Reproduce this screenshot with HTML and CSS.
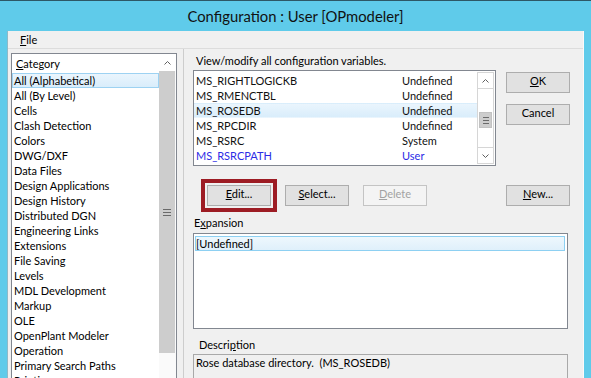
FILE: index.html
```html
<!DOCTYPE html>
<html lang="en">
<head>
    <meta charset="UTF-8">
    <meta name="viewport" content="width=device-width, initial-scale=1.0">
    <title>Configuration : User [OPmodeler]</title>
    <link rel="stylesheet" href="styles.css">
</head>
<body>
    <div class="window">
        <div class="titlebar">Configuration : User [OPmodeler]</div>
        <div class="client">
            <div class="menubar">
                <span class="menu-item"><u>F</u>ile</span>
            </div>
            <div class="content">
                <div class="category-list">
                    <div class="list-body">
                        <div class="list-header"><u>C</u>ategory</div>
                        <div class="list-item selected">All (Alphabetical)</div>
                        <div class="list-item">All (By Level)</div>
                        <div class="list-item">Cells</div>
                        <div class="list-item">Clash Detection</div>
                        <div class="list-item">Colors</div>
                        <div class="list-item">DWG/DXF</div>
                        <div class="list-item">Data Files</div>
                        <div class="list-item">Design Applications</div>
                        <div class="list-item">Design History</div>
                        <div class="list-item">Distributed DGN</div>
                        <div class="list-item">Engineering Links</div>
                        <div class="list-item">Extensions</div>
                        <div class="list-item">File Saving</div>
                        <div class="list-item">Levels</div>
                        <div class="list-item">MDL Development</div>
                        <div class="list-item">Markup</div>
                        <div class="list-item">OLE</div>
                        <div class="list-item">OpenPlant Modeler</div>
                        <div class="list-item">Operation</div>
                        <div class="list-item">Primary Search Paths</div>
                        <div class="list-item">Printing</div>
                    </div>
                    <div class="scrollbar">
                        <div class="scroll-btn">
                            <svg width="7" height="4" viewBox="0 0 7 4"><path d="M0.5 3.5L3.5 0.5L6.5 3.5" fill="none" stroke="#606060"/></svg>
                        </div>
                        <div class="scroll-thumb big">
                            <svg width="8" height="7" viewBox="0 0 8 7"><path d="M0 0.5H8M0 3.5H8M0 6.5H8" stroke="#6a6a6a"/></svg>
                        </div>
                        <div class="scroll-track"></div>
                    </div>
                </div>

                <div class="var-pane">
                    <div class="top-row">
                        <div class="var-col">
                            <div class="caption">View/modify all configuration variables.</div>
                            <div class="var-list">
                                <div class="var-rows">
                                    <div class="var-row"><span class="var-name">MS_RIGHTLOGICKB</span><span>Undefined</span></div>
                                    <div class="var-row"><span class="var-name">MS_RMENCTBL</span><span>Undefined</span></div>
                                    <div class="var-row selected"><span class="var-name">MS_ROSEDB</span><span>Undefined</span></div>
                                    <div class="var-row"><span class="var-name">MS_RPCDIR</span><span>Undefined</span></div>
                                    <div class="var-row"><span class="var-name">MS_RSRC</span><span>System</span></div>
                                    <div class="var-row user"><span class="var-name">MS_RSRCPATH</span><span>User</span></div>
                                </div>
                                <div class="scrollbar small">
                                    <div class="scroll-btn up">
                                        <svg width="7" height="4" viewBox="0 0 7 4"><path d="M0.5 3.5L3.5 0.5L6.5 3.5" fill="none" stroke="#606060"/></svg>
                                    </div>
                                    <div class="scroll-gap"></div>
                                    <div class="scroll-thumb">
                                        <svg width="6" height="7" viewBox="0 0 6 7"><path d="M0 0.5H6M0 3.5H6M0 6.5H6" stroke="#6a6a6a"/></svg>
                                    </div>
                                    <div class="scroll-track"></div>
                                    <div class="scroll-btn down">
                                        <svg width="7" height="4" viewBox="0 0 7 4"><path d="M0.5 0.5L3.5 3.5L6.5 0.5" fill="none" stroke="#606060"/></svg>
                                    </div>
                                </div>
                            </div>
                        </div>
                        <div class="dialog-buttons">
                            <button class="btn"><u>O</u>K</button>
                            <button class="btn">Cancel</button>
                        </div>
                    </div>

                    <div class="action-row">
                        <button class="btn marked"><u>E</u>dit...</button>
                        <button class="btn"><u>S</u>elect...</button>
                        <button class="btn" disabled><u>D</u>elete</button>
                        <button class="btn new-btn"><u>N</u>ew...</button>
                    </div>

                    <div class="field-label">E<u>x</u>pansion</div>
                    <div class="expansion-box">
                        <div class="expansion-value">[Undefined]</div>
                    </div>

                    <div class="field-label indent">Descri<u>p</u>tion</div>
                    <div class="description-box">Rose database directory.  (MS_ROSEDB)</div>
                </div>
            </div>
        </div>
    </div>
</body>
</html>
```
FILE: styles.css
```css
body {
    margin: 0;
    font-family: Lato, "Liberation Sans", sans-serif;
    font-size: 11px;
    color: #000;
    overflow: hidden;
}
.window {
    width: 591px;
    height: 378px;
    box-sizing: border-box;
    overflow: hidden;
    background-color: #5fcbea;
    border-top: 1px solid #2d5866;
    padding: 0 7px;
    display: flex;
    flex-direction: column;
}
.titlebar {
    height: 30px;
    line-height: 30px;
    flex-shrink: 0;
    text-align: center;
    font-size: 14.8px;
    color: #111;
}
.client {
    flex: 1;
    background-color: #f0f0f0;
    border-left: 1px solid #8fb9c7;
    border-right: 1px solid #fafafa;
    display: flex;
    flex-direction: column;
}
.menubar {
    height: 16px;
    padding: 1px 0 0 12px;
    line-height: 16px;
    border-bottom: 1px solid #dcdcdc;
    flex-shrink: 0;
}
.content {
    display: flex;
    align-items: flex-start;
    padding-left: 3px;
}

/* category list on the left */
.category-list {
    width: 166px;
    box-sizing: border-box;
    margin-top: 4px;
    border: 1px solid #828790;
    background-color: #fff;
    display: flex;
    align-self: stretch;
}
.list-body {
    flex: 1;
}
.list-header {
    height: 17px;
    line-height: 17px;
    padding: 1px 0 0 4px;
    margin-bottom: 1px;
}
.list-item {
    height: 13px;
    line-height: 13px;
    padding-left: 1px;
    border: 1px solid transparent;
    white-space: nowrap;
}
.selected {
    background: linear-gradient(#eaf5fd, #d9edfb);
    border-color: #9dd2f2;
}

/* scrollbars */
.scrollbar {
    width: 17px;
    flex-shrink: 0;
    display: flex;
    flex-direction: column;
    background-color: #fafafa;
}
.scroll-btn {
    height: 17px;
    display: flex;
    justify-content: center;
    align-items: center;
    background-color: #fff;
    flex-shrink: 0;
}
.scroll-thumb {
    height: 16px;
    box-sizing: border-box;
    margin: 0 1px;
    background-color: #cdcdcd;
    display: flex;
    justify-content: center;
    align-items: center;
    flex-shrink: 0;
}
.scroll-thumb.big {
    height: 282px;
    margin: 0 1px 0 0;
}
.scroll-track {
    flex: 1;
}
.scrollbar.small {
    box-sizing: border-box;
    margin: 1px 1px 1px 0;
    border: 1px solid #d6d6d6;
    background-color: #fff;
}
.scrollbar.small .scroll-btn {
    height: 15px;
}
.scrollbar.small .up {
    border-bottom: 1px solid #d6d6d6;
}
.scrollbar.small .down {
    border-top: 1px solid #d6d6d6;
}
.scroll-gap {
    height: 23px;
    flex-shrink: 0;
}
.scrollbar.small .scroll-thumb {
    border: 1px solid #c2c2c2;
}

/* right side */
.var-pane {
    flex: 1;
    align-self: stretch;
    margin-left: 6px;
    border-left: 1px solid #cdcdcd;
    padding: 5px 13px 0 9px;
}
.top-row {
    display: flex;
    align-items: flex-start;
}
.caption {
    line-height: 14px;
    padding-left: 3px;
    margin-bottom: 2px;
}
.var-list {
    width: 303px;
    height: 96px;
    box-sizing: border-box;
    border: 1px solid #828790;
    background-color: #fff;
    display: flex;
}
.var-rows {
    flex: 1;
    padding-top: 2px;
}
.var-row {
    height: 13px;
    line-height: 13px;
    padding-left: 1px;
    border: 1px solid transparent;
    white-space: nowrap;
    color: #111;
}
.var-name {
    display: inline-block;
    width: 206px;
}
.var-row.user {
    color: #2b2be6;
}
.dialog-buttons {
    margin: 18px 0 0 10px;
    display: flex;
    flex-direction: column;
    gap: 11px;
}
.btn {
    width: 64px;
    height: 21px;
    box-sizing: border-box;
    padding: 0 0 4px;
    line-height: 15px;
    font-family: inherit;
    font-size: 11px;
    color: #000;
    background-color: #e1e1e1;
    border: 1px solid #adadad;
    border-radius: 0;
}
.btn:disabled {
    color: #a2a2a2;
    background-color: #f4f4f4;
    border-color: #c4c4c4;
}
.btn.marked {
    outline: 4px solid #9d1c24;
    outline-offset: 2px;
}
.action-row {
    display: flex;
    gap: 14px;
    margin-top: 19px;
    padding-left: 14px;
}
.new-btn {
    margin-left: auto;
}
.field-label {
    line-height: 14px;
    padding-left: 1px;
    margin: 10px 0 3px;
}
.field-label.indent {
    padding-left: 6px;
    margin: 9px 0 2px;
}
.expansion-box {
    width: 375px;
    height: 96px;
    box-sizing: border-box;
    padding: 2px 2px 2px 1px;
    border: 1px solid #828790;
    background-color: #fff;
}
.expansion-value {
    height: 13px;
    line-height: 13px;
    border: 1px solid #8dd0f2;
    background: linear-gradient(#eef7fd, #dff0fb);
}
.description-box {
    width: 375px;
    height: 40px;
    box-sizing: border-box;
    padding: 1px 2px;
    line-height: 14px;
    border: 1px solid #a9a9a9;
    white-space: pre;
}
```
